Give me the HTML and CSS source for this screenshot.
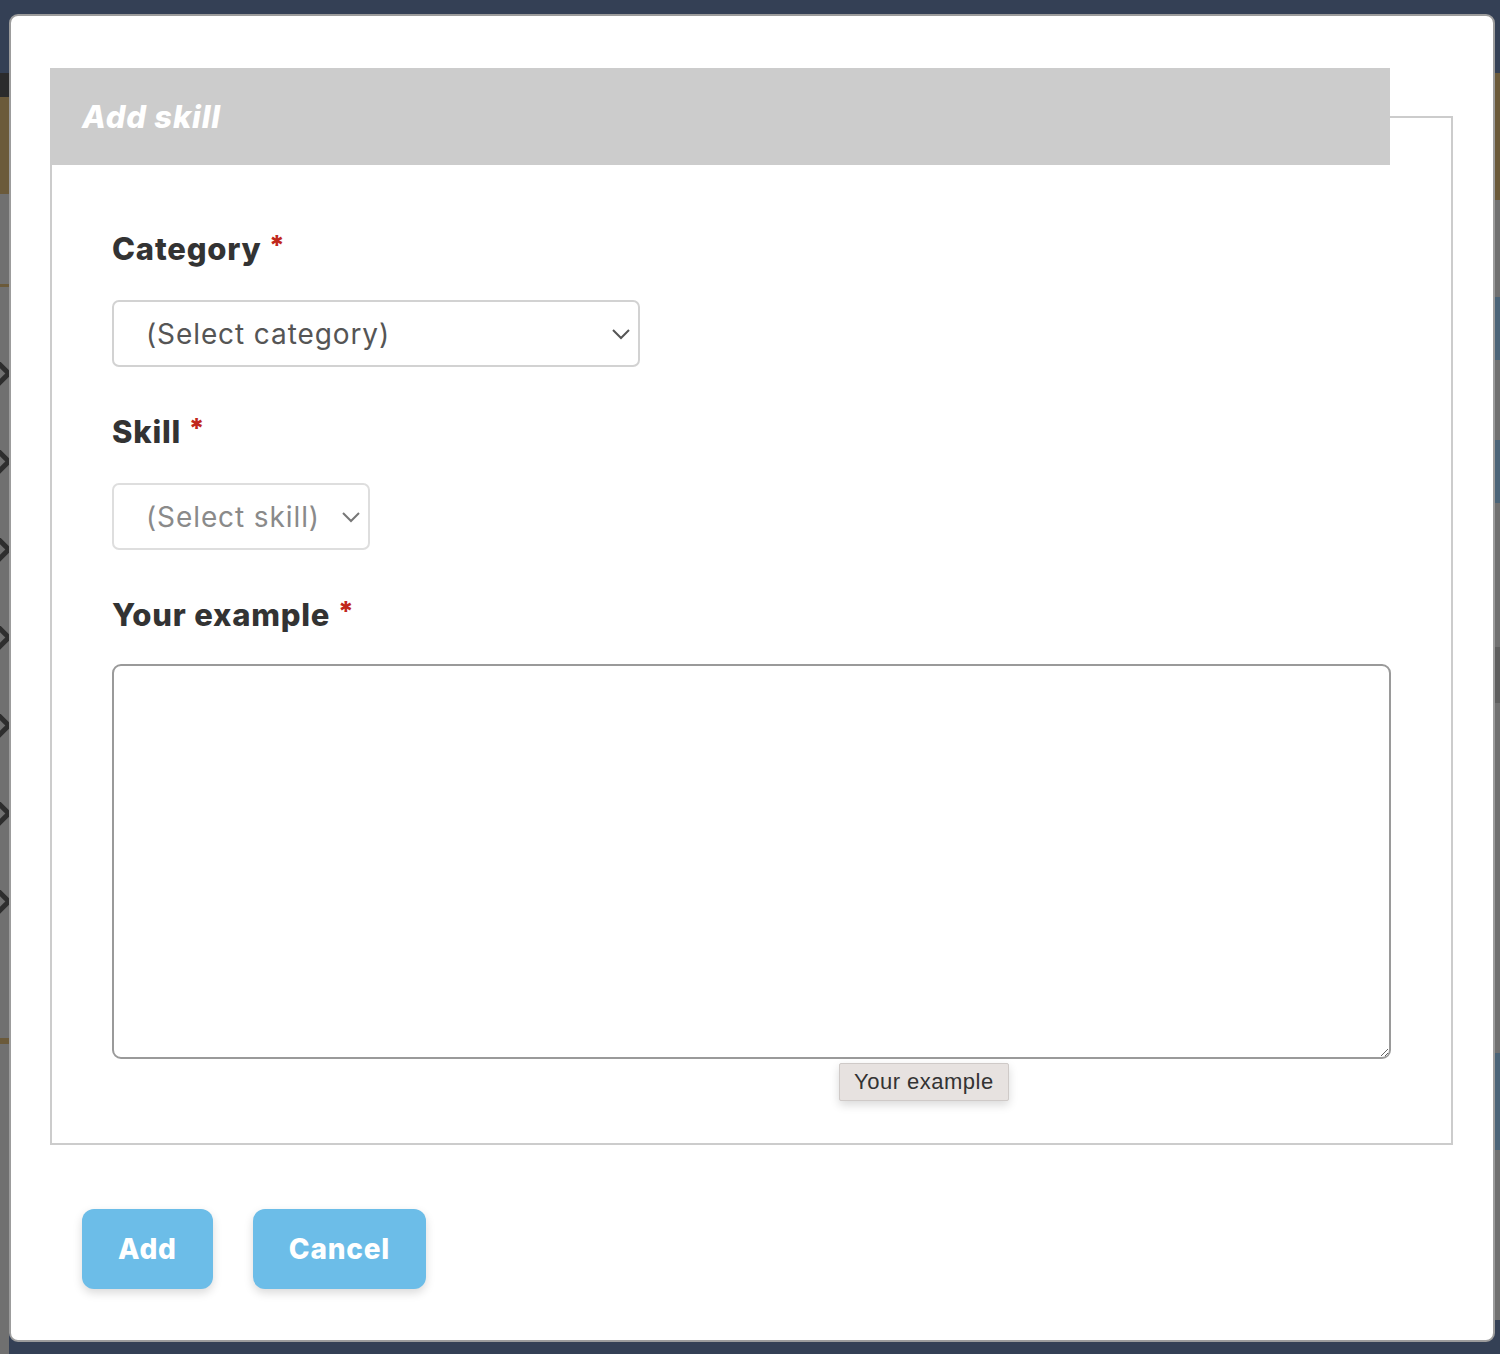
FILE: index.html
```html
<!DOCTYPE html>
<html>
  <head>
    <title>Add skill</title>
    <link rel="stylesheet" href="styles.css">
  </head>
  <body>
    <!-- dimmed page behind the dialog -->
    <div class="backdrop">
      <div class="strip strip-left">
        <div class="blk navy" style="height: 75px"></div>
        <div class="blk dark" style="height: 25px"></div>
        <div class="blk brown" style="height: 100px"></div>
        <div class="blk gray" style="height: 93px"></div>
        <div class="blk brown" style="height: 3px"></div>
        <div class="blk gray chevrons" style="height: 697px">
          <span class="chev"></span><span class="chev"></span><span class="chev"></span>
          <span class="chev"></span><span class="chev"></span><span class="chev"></span>
          <span class="chev"></span>
        </div>
        <div class="blk brown" style="height: 6px"></div>
        <div class="blk gray" style="height: 320px"></div>
      </div>
      <div class="strip strip-right">
        <div class="blk navy" style="height: 73px"></div>
        <div class="blk brown" style="height: 127px"></div>
        <div class="blk gray" style="height: 97px"></div>
        <div class="blk blue" style="height: 63px"></div>
        <div class="blk gray" style="height: 80px"></div>
        <div class="blk blue" style="height: 63px"></div>
        <div class="blk gray" style="height: 144px"></div>
        <div class="blk darkgray" style="height: 56px"></div>
        <div class="blk gray" style="height: 350px"></div>
        <div class="blk blue" style="height: 97px"></div>
        <div class="blk gray" style="height: 170px"></div>
      </div>
    </div>

    <div class="modal">
      <form class="skill-form">
        <fieldset class="skill-box">
          <legend class="skill-legend">Add skill</legend>

          <div class="field">
            <label class="field-label" for="category">Category <span class="req">*</span></label>
            <select id="category" class="select select-category">
              <option>(Select category)</option>
            </select>
          </div>

          <div class="field">
            <label class="field-label" for="skill">Skill <span class="req">*</span></label>
            <select id="skill" class="select select-skill">
              <option>(Select skill)</option>
            </select>
          </div>

          <div class="field">
            <label class="field-label label-tight" for="example">Your example <span class="req">*</span></label>
            <textarea id="example" class="example" title="Your example"></textarea>
          </div>
        </fieldset>

        <div class="actions">
          <button type="button" class="btn">Add</button>
          <button type="button" class="btn">Cancel</button>
        </div>
      </form>

      <div class="tooltip">Your example</div>
    </div>
  </body>
</html>
```

FILE: styles.css
```css
body {
  margin: 0;
  height: 1354px;
  overflow: hidden;
  background-color: #344055;
  font-family: Inter, "Noto Sans", sans-serif;
}

.backdrop {
  display: flex;
  justify-content: space-between;
  height: 1354px;
}

.strip {
  display: flex;
  flex-direction: column;
}

.strip-left {
  width: 9px;
}

.strip-right {
  width: 5px;
}

.navy { background-color: #344055; }
.dark { background-color: #2b2b2c; }
.brown { background-color: #6b5a3a; }
.gray { background-color: #707070; }
.darkgray { background-color: #5e5e5e; }
.blue { background-color: #4b6478; }

.chevrons {
  display: flex;
  flex-direction: column;
  gap: 67px;
  padding-top: 76px;
  overflow: hidden;
}

.chev {
  display: block;
  flex: none;
  width: 16px;
  height: 16px;
  margin-left: -13px;
  border-top: 5px solid #2e2e2e;
  border-right: 5px solid #2e2e2e;
  transform: rotate(45deg);
}

.modal {
  position: absolute;
  left: 9px;
  top: 14px;
  width: 1486px;
  height: 1328px;
  box-sizing: border-box;
  background-color: white;
  border: 2px solid #9c9c9c;
  border-radius: 9px;
  padding: 52px 40px 0 39px;
}

.skill-form {
  margin: 0;
}

.skill-box {
  margin: 0;
  border: 2px solid #cccccc;
  padding: 64px 60px 84px 60px;
}

.skill-legend {
  margin-left: -62px;
  width: 1340px;
  height: 97px;
  box-sizing: border-box;
  padding: 0 0 0 32px;
  background-color: #cccccc;
  color: white;
  font-size: 31px;
  font-weight: 800;
  font-style: italic;
  line-height: 97px;
  letter-spacing: 0.8px;
}

.field + .field {
  margin-top: 45px;
}

.field-label {
  display: block;
  color: #333333;
  font-size: 31px;
  font-weight: 800;
  line-height: 40px;
  letter-spacing: 0.8px;
  margin-bottom: 31px;
}

.label-tight {
  margin-bottom: 29px;
}

.req {
  color: #c1281c;
  font-size: 27px;
  line-height: 0;
  vertical-align: 5px;
}

.select {
  display: block;
  appearance: none;
  height: 67px;
  box-sizing: border-box;
  border: 2px solid #d2d2d2;
  border-radius: 7px;
  background-color: white;
  padding: 0 0 0 32px;
  font-family: Inter, "Noto Sans", sans-serif;
  font-size: 28px;
  letter-spacing: 0.9px;
  color: #555555;
  background-repeat: no-repeat;
  background-position: right 7px center;
  background-size: 20px 12px;
  background-image: url("data:image/svg+xml,%3Csvg xmlns='http://www.w3.org/2000/svg' viewBox='0 0 20 12'%3E%3Cpath d='M2 2l8 8 8-8' fill='none' stroke='%23555' stroke-width='2'/%3E%3C/svg%3E");
}

.select-category {
  width: 528px;
}

.select-skill {
  width: 258px;
  color: #8a8a8a;
  border-color: #dedede;
  background-image: url("data:image/svg+xml,%3Csvg xmlns='http://www.w3.org/2000/svg' viewBox='0 0 20 12'%3E%3Cpath d='M2 2l8 8 8-8' fill='none' stroke='%23777' stroke-width='2'/%3E%3C/svg%3E");
}

.example {
  display: block;
  width: 100%;
  height: 395px;
  box-sizing: border-box;
  border: 2px solid #9a9a9a;
  border-radius: 9px;
  resize: vertical;
  font-family: Inter, "Noto Sans", sans-serif;
  font-size: 24px;
}

.actions {
  display: flex;
  gap: 40px;
  margin: 64px 0 0 32px;
}

.btn {
  height: 80px;
  padding: 0 36px;
  border: none;
  border-radius: 12px;
  background-color: #6cbde8;
  color: white;
  font-family: Inter, "Noto Sans", sans-serif;
  font-size: 28px;
  font-weight: 800;
  letter-spacing: 0.8px;
  box-shadow: 0 4px 10px rgba(0, 0, 0, 0.15);
  cursor: pointer;
}

.tooltip {
  position: absolute;
  left: 828px;
  top: 1047px;
  height: 38px;
  box-sizing: border-box;
  padding: 0 14px;
  background-color: #e7e2e0;
  border: 1px solid #cfcac8;
  border-radius: 2px;
  box-shadow: 0 4px 10px rgba(0, 0, 0, 0.15);
  color: #333333;
  font-family: "Liberation Sans", Arial, sans-serif;
  font-size: 22px;
  letter-spacing: 0.5px;
  line-height: 36px;
}
```
